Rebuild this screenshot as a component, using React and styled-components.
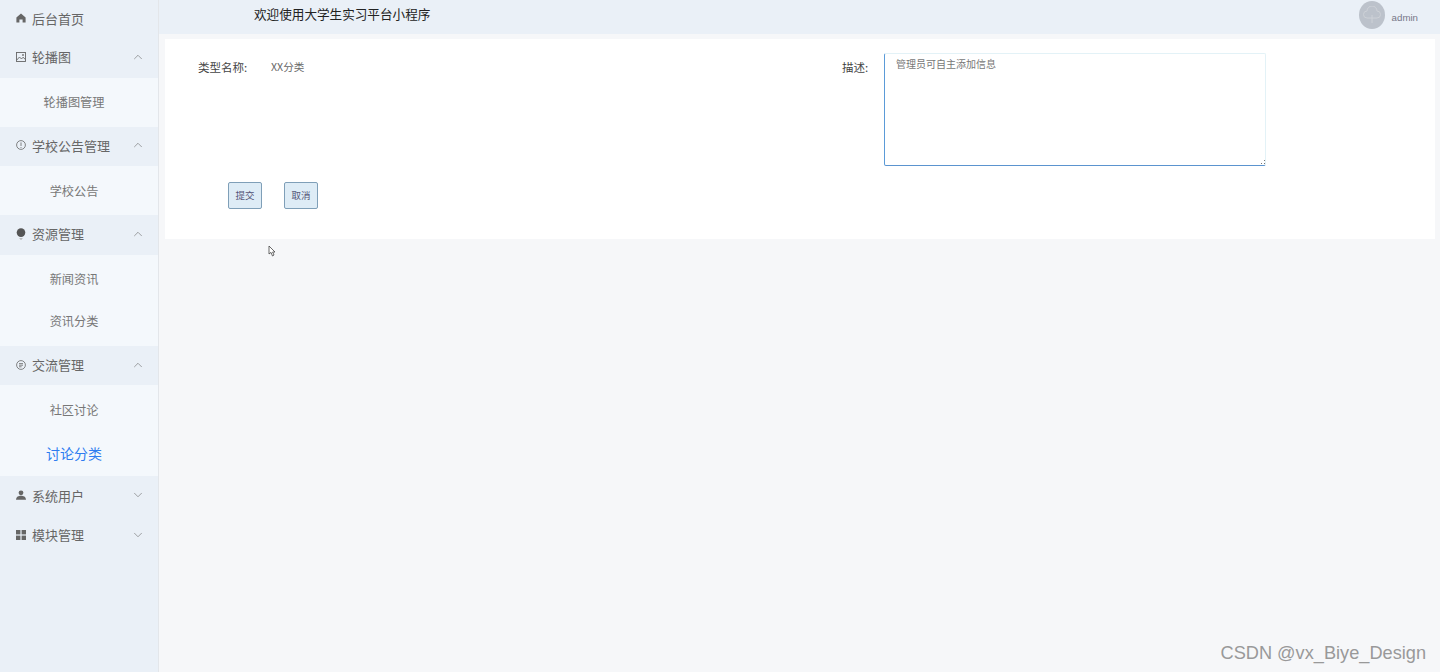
import React from "react";
import styled, { createGlobalStyle } from "styled-components";
import { ChevronUp, ChevronDown } from "lucide-react";

const Global = createGlobalStyle`
  html, body { margin: 0; padding: 0; height: 100%; overflow: hidden; background: #f6f7f9; }
  * { box-sizing: border-box; }
  body { font-family: "Noto Sans CJK SC", "Liberation Sans", sans-serif; }
`;
const Shell = styled.div`
  position: relative; display: flex; width: 1440px; height: 672px; background: #f6f7f9; overflow: hidden;
`;
const Sidebar = styled.aside`
  width: 159px; flex: none; background: #eaf0f7; border-right: 1px solid #e3e6ea;
`;
const MenuTitle = styled.div`
  display: flex; align-items: center; height: ${p => p.$h || 39.6}px; padding: 0 13px 2px 16px;
  font-size: 13px; color: #666; background: #eaf0f7;
`;
const IconSlot = styled.span`
  width: 16px; display: flex; align-items: center; flex: none; color: #666;
`;
const TitleText = styled.span` flex: 1; `;
const SubList = styled.div`
  padding: 3.5px 10px 3.5px 0; background: #f4f8fc;
`;
const SubItem = styled.div`
  height: 42px; display: flex; align-items: center; justify-content: center;
  font-size: ${p => (p.$active ? 14 : 12.2)}px; color: ${p => (p.$active ? "#2e7cf0" : "#777")};
  padding-top: ${p => (p.$active ? 2 : 0)}px;
`;
const Main = styled.main` flex: 1; min-width: 0; display: flex; flex-direction: column; `;
const Header = styled.header`
  height: 34px; flex: none; background: #eaf0f7; display: flex; align-items: center;
  justify-content: space-between; padding: 0 22px 0 95px;
`;
const Welcome = styled.div` font-size: 12.6px; color: #222; padding-bottom: 8px; `;
const User = styled.div` display: flex; align-items: center; gap: 7px; padding-bottom: 4px; `;
const Avatar = styled.div`
  width: 26px; height: 28px; border-radius: 50%; background: #bcc2cb; display: flex; align-items: center; justify-content: center;
`;
const UserName = styled.span` font-family: "Liberation Sans", sans-serif; font-size: 9.7px; color: #778; padding-top: 4px; `;
const Card = styled.section`
  margin: 5px 5px 0 6px; height: 200px; background: #fff; padding: 14px 0 0 33px;
`;
const FormGrid = styled.div`
  display: grid; grid-template-columns: 644px 1fr; height: 129px;
`;
const Field = styled.div` display: flex; align-items: flex-start; `;
const Label = styled.label`
  font-size: 11.5px; color: #444; width: ${p => p.$w}px; flex: none; line-height: 16px; padding-top: 6px;
`;
const Value = styled.span` font-size: 10.6px; color: #666; line-height: 16px; padding-top: 6px; `;
const AreaWrap = styled.div` position: relative; width: 382px; height: 113px; `;
const Area = styled.textarea`
  display: block; width: 100%; height: 100%; border: 1px solid #e3f2f7; border-left: 1.5px solid #5b9bd8;
  border-bottom: 1.5px solid #5b94cf; border-radius: 2px; padding: 2px 11px; outline: none; resize: none;
  font-family: inherit; font-size: 10px; line-height: 16px; color: #777; background: #fff;
`;
const Grip = styled.svg` position: absolute; right: 1px; bottom: 2px; `;
const Buttons = styled.div` display: flex; gap: 22px; padding-left: 30px; `;
const Btn = styled.button`
  width: 34px; height: 27px; border: 1px solid #7f9fb8; border-radius: 2px; background: #deecf6; padding: 0 0 1px;
  font-family: inherit; font-size: 9.5px; color: #557;
`;
const CursorMark = styled.svg`
  position: absolute; left: 268px; top: 245px;
`;
const Watermark = styled.div`
  position: absolute; right: 14px; bottom: 8px; font-family: "Liberation Sans", sans-serif;
  font-size: 18.2px; color: #999;
`;

const Home = () => (<svg width="10" height="10" viewBox="0 0 10 10"><path d="M5 .5 9.6 4.5V9.6H6.6V6.6H3.4V9.6H.4V4.5Z" fill="#666"/></svg>);
const Pic = () => (<svg width="10" height="10" viewBox="0 0 10 10" fill="none" stroke="#666" strokeWidth=".9"><rect x=".5" y=".5" width="9" height="9"/><path d="M.8 8 3.5 5l2 2L7 5.2 9.4 7.5"/><circle cx="7" cy="3" r=".6"/></svg>);
const Info = () => (<svg width="10" height="10" viewBox="0 0 10 10" fill="none" stroke="#666" strokeWidth=".8"><circle cx="5" cy="5" r="4.4"/><path d="M5 2.4V6M5 7v.9"/></svg>);
const Bulb = () => (<svg width="10" height="12" viewBox="0 0 10 12"><circle cx="5" cy="4.6" r="4.3" fill="#555"/><path d="M3.5 10h3v.8h-3zM4 11.2h2v.6H4z" fill="#aaa"/></svg>);
const Chat = () => (<svg width="10" height="10" viewBox="0 0 10 10" fill="none" stroke="#666" strokeWidth=".8"><circle cx="5" cy="5" r="4.4"/><path d="M3 3.6h4M3 5.2h4M3 6.8h2.6"/></svg>);
const UserI = () => (<svg width="10" height="10" viewBox="0 0 10 10" fill="#666"><circle cx="5" cy="2.8" r="2.4"/><path d="M0 9.8C.3 6.6 2.5 5.8 5 5.8s4.7.8 5 4Z"/></svg>);
const Grid = () => (<svg width="10" height="10" viewBox="0 0 10 10" fill="#666"><rect width="4.4" height="4.4"/><rect x="5.6" width="4.4" height="4.4"/><rect y="5.6" width="4.4" height="4.4"/><rect x="5.6" y="5.6" width="4.4" height="4.4"/></svg>);

const menus = [
  { icon: <Pic />, title: "轮播图", open: true, subs: ["轮播图管理"] },
  { icon: <Info />, title: "学校公告管理", open: true, subs: ["学校公告"] },
  { icon: <Bulb />, title: "资源管理", open: true, subs: ["新闻资讯", "资讯分类"] },
  { icon: <Chat />, title: "交流管理", open: true, subs: ["社区讨论", "讨论分类"], active: "讨论分类" },
  { icon: <UserI />, title: "系统用户" },
  { icon: <Grid />, title: "模块管理" },
];

export default function App() {
  return (
    <Shell>
      <Global />
      <Sidebar>
        <MenuTitle $h={38}><IconSlot><Home /></IconSlot><TitleText>后台首页</TitleText></MenuTitle>
        {menus.map(m => (
          <React.Fragment key={m.title}>
            <MenuTitle>
              <IconSlot>{m.icon}</IconSlot>
              <TitleText>{m.title}</TitleText>
              {m.open ? <ChevronUp size={14} strokeWidth={1} color="#666" /> : <ChevronDown size={14} strokeWidth={1} color="#666" />}
            </MenuTitle>
            {m.subs && (
              <SubList>
                {m.subs.map(s => <SubItem key={s} $active={s === m.active}>{s}</SubItem>)}
              </SubList>
            )}
          </React.Fragment>
        ))}
      </Sidebar>
      <Main>
        <Header>
          <Welcome>欢迎使用大学生实习平台小程序</Welcome>
          <User>
            <Avatar>
              <svg width="20" height="18" viewBox="0 0 20 18" fill="none" stroke="#cdd1d7" strokeWidth="1"><path d="M5 12a3.5 3.5 0 0 1 0-7 5 5 0 0 1 10 0 3.5 3.5 0 0 1 0 7H5ZM10 9v8"/></svg>
            </Avatar>
            <UserName>admin</UserName>
          </User>
        </Header>
        <Card>
          <FormGrid>
            <Field>
              <Label $w={73}>类型名称:</Label>
              <Value>XX分类</Value>
            </Field>
            <Field>
              <Label $w={42}>描述:</Label>
              <AreaWrap>
                <Area readOnly defaultValue="管理员可自主添加信息" />
                <Grip width="4" height="4" viewBox="0 0 4 4" fill="#777"><rect x="3" y="0" width="1" height="1"/><rect x="0" y="3" width="1" height="1"/><rect x="3" y="3" width="1" height="1"/></Grip>
              </AreaWrap>
            </Field>
          </FormGrid>
          <Buttons>
            <Btn>提交</Btn>
            <Btn>取消</Btn>
          </Buttons>
        </Card>
      </Main>
      <CursorMark width="8" height="12" viewBox="0 0 8 12" fill="#fff" stroke="#444" strokeWidth=".8"><path d="M1 1v8l2-1.6L4.5 11 6 10 4.6 7H7Z"/></CursorMark>
      <Watermark>CSDN @vx_Biye_Design</Watermark>
    </Shell>
  );
}
